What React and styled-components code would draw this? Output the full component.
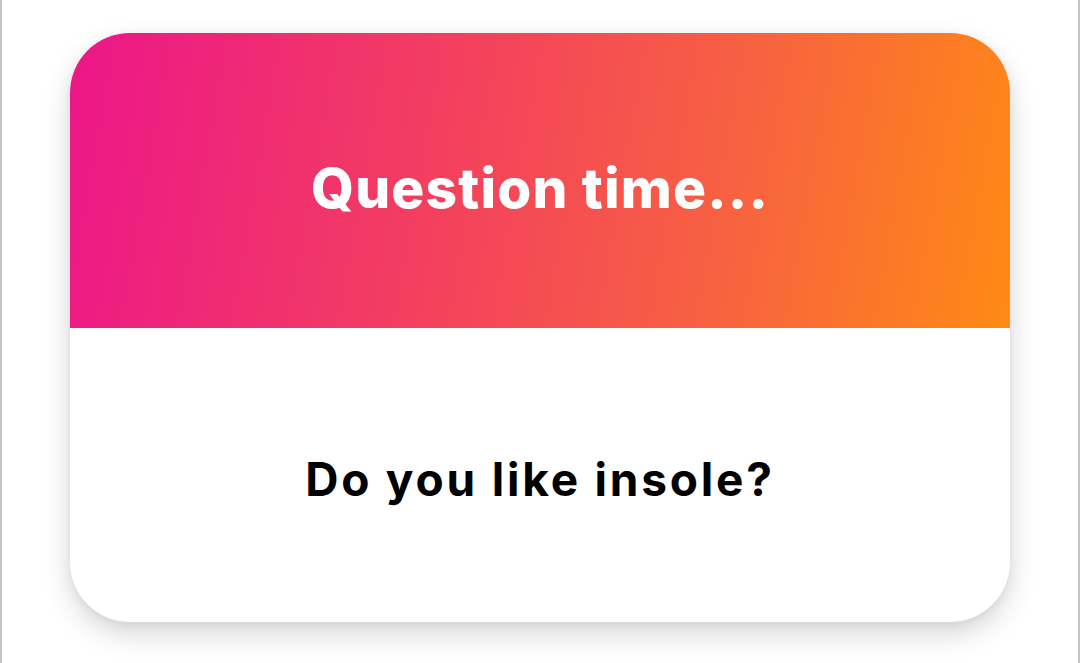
import styled, { createGlobalStyle } from "styled-components";

const GlobalStyle = createGlobalStyle`
  html, body {
    margin: 0;
    padding: 0;
    background: #ffffff;
  }
  body {
    font-family: Inter, "Liberation Sans", sans-serif;
  }
`;

const Frame = styled.div`
  box-sizing: border-box;
  width: 1080px;
  height: 663px;
  border-left: 2px solid #c4c4c4;
  border-right: 2px solid #c4c4c4;
  padding: 33px 68px 0 68px;
`;

const Card = styled.div`
  height: 589px;
  border-radius: 60px;
  overflow: hidden;
  background: #ffffff;
  box-shadow: 0 12px 28px rgba(0, 0, 0, 0.16), 0 2px 8px rgba(0, 0, 0, 0.06);
  display: grid;
  grid-template-rows: 295px 1fr;
`;

const Header = styled.div`
  background: linear-gradient(100deg, #ec1689 0%, #f3405e 40%, #f76240 70%, #ff8a14 100%);
  display: flex;
  align-items: center;
  justify-content: center;
  padding-top: 14px;
`;

const Title = styled.h1`
  margin: 0;
  color: #ffffff;
  font-size: 55px;
  font-weight: 800;
  letter-spacing: 1.2px;
`;

const Body = styled.div`
  display: flex;
  align-items: center;
  justify-content: center;
  padding-top: 8px;
`;

const Question = styled.p`
  margin: 0;
  color: #000000;
  font-size: 46px;
  font-weight: 700;
  letter-spacing: 2.8px;
`;

export default function App() {
  return (
    <>
      <GlobalStyle />
      <Frame>
        <Card>
          <Header>
            <Title>Question time...</Title>
          </Header>
          <Body>
            <Question>Do you like insole?</Question>
          </Body>
        </Card>
      </Frame>
    </>
  );
}
